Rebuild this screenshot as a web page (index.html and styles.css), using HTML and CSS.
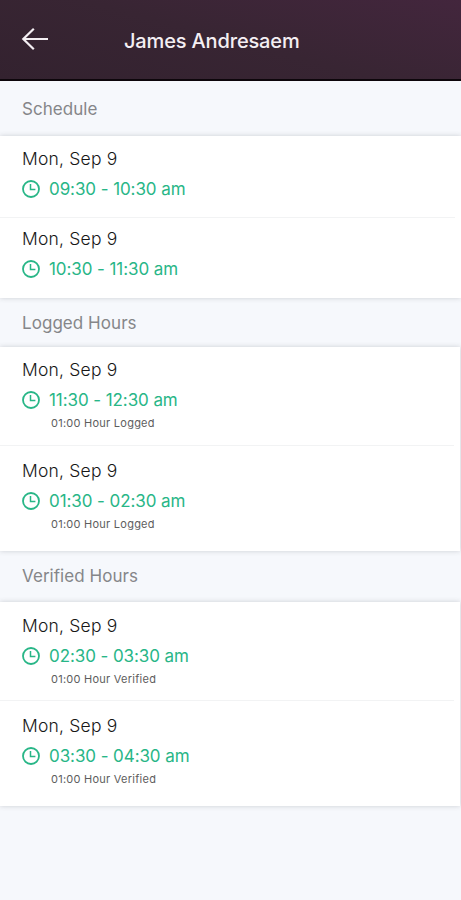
FILE: index.html
```html
<!DOCTYPE html>
<html lang="en">
<head>
<meta charset="utf-8">
<title>James Andresaem</title>
<link rel="stylesheet" href="styles.css">
</head>
<body>
<svg width="0" height="0" class="defs"><symbol id="clock" viewBox="0 0 18 18"><circle cx="9" cy="9" r="8"/><path d="M8.5 4V9.4H13.4" stroke-width="1.5"/></symbol></svg>
<header class="header">
  <svg class="back" viewBox="0 0 28 24"><path d="M27 12H2M12.8 1.8L2.3 12L12.8 22.2"/></svg>
  <h1 class="title">James Andresaem</h1>
</header>
<main>
  <h2 class="label label-first"><span>Schedule</span></h2>
  <section class="card card-schedule">
    <article class="row">
      <div class="date">Mon, Sep 9</div>
      <div class="time"><svg class="clock"><use href="#clock"/></svg><span>09:30 - 10:30 am</span></div>
    </article>
    <article class="row">
      <div class="date">Mon, Sep 9</div>
      <div class="time"><svg class="clock"><use href="#clock"/></svg><span>10:30 - 11:30 am</span></div>
    </article>
  </section>
  <h2 class="label label-logged"><span>Logged Hours</span></h2>
  <section class="card card-logged">
    <article class="row">
      <div class="date">Mon, Sep 9</div>
      <div class="time"><svg class="clock"><use href="#clock"/></svg><span>11:30 - 12:30 am</span></div>
      <div class="note">01:00 Hour Logged</div>
    </article>
    <article class="row">
      <div class="date">Mon, Sep 9</div>
      <div class="time"><svg class="clock"><use href="#clock"/></svg><span>01:30 - 02:30 am</span></div>
      <div class="note">01:00 Hour Logged</div>
    </article>
  </section>
  <h2 class="label label-verified"><span>Verified Hours</span></h2>
  <section class="card card-verified">
    <article class="row">
      <div class="date">Mon, Sep 9</div>
      <div class="time"><svg class="clock"><use href="#clock"/></svg><span>02:30 - 03:30 am</span></div>
      <div class="note">01:00 Hour Verified</div>
    </article>
    <article class="row">
      <div class="date">Mon, Sep 9</div>
      <div class="time"><svg class="clock"><use href="#clock"/></svg><span>03:30 - 04:30 am</span></div>
      <div class="note">01:00 Hour Verified</div>
    </article>
  </section>
</main>
</body>
</html>
```
FILE: styles.css
```css
* { box-sizing: border-box; }
body {
  margin: 0;
  min-height: 900px;
  background: #f6f8fc;
  font-family: Inter, "Liberation Sans", sans-serif;
  color: #303030;
}
.defs { display: block; }
svg { fill: none; stroke: currentColor; }
.header {
  height: 81px;
  display: flex;
  align-items: center;
  padding: 0 0 2px 21px;
  background: linear-gradient(15deg, #33222f 0%, #382533 50%, #43263d 100%);
  border-bottom: 2px solid #0d060b;
  color: #f4eff3;
}
.back { width: 28px; height: 24px; stroke-width: 2.2; }
.title {
  margin: 4px 0 0 75px;
  font-size: 20px;
  line-height: 24px;
  font-weight: 500;
  letter-spacing: -0.15px;
  white-space: nowrap;
}
.label {
  margin: 0;
  padding-left: 22px;
  display: flex;
  align-items: center;
  font-size: 17px;
  font-weight: 400;
  letter-spacing: 0.05px;
  color: #858689;
}
.label-first { height: 55px; }
.label-logged { height: 49px; }
.label-verified { height: 51px; padding-bottom: 2px; }
.card { background: #fff; box-shadow: 0 0 5px rgba(60, 65, 70, 0.22); }
.card-logged, .card-verified { margin-right: 1px; }
.row { padding: 11px 0 0 22px; height: 80px; }
.row + .row { padding-top: 9px; }
.row:first-child {
  height: 82px;
  background: linear-gradient(#f2f3f4, #f2f3f4) left bottom / calc(100% - 6px) 1px no-repeat;
}
.card-logged .row, .card-verified .row { height: 105px; padding-top: 12px; }
.card-logged .row:first-child, .card-verified .row:first-child { height: 99px; }
.card-logged .row:first-child { padding-top: 11px; }
.card-logged .row + .row, .card-verified .row + .row { padding-top: 13px; }
.date { font-size: 17.5px; line-height: 24px; letter-spacing: 0.2px; font-weight: 300; color: #171717; }
.time {
  display: flex;
  align-items: center;
  gap: 9px;
  height: 24px;
  margin-top: 6px;
  font-size: 17px;
  letter-spacing: -0.08px;
  color: #28b687;
  white-space: nowrap;
}
.clock { width: 18px; height: 18px; stroke-width: 1.8; }
.note { margin: 4px 0 0 29px; font-size: 11px; line-height: 14px; letter-spacing: 0.25px; color: #5d5d5d; }
```
